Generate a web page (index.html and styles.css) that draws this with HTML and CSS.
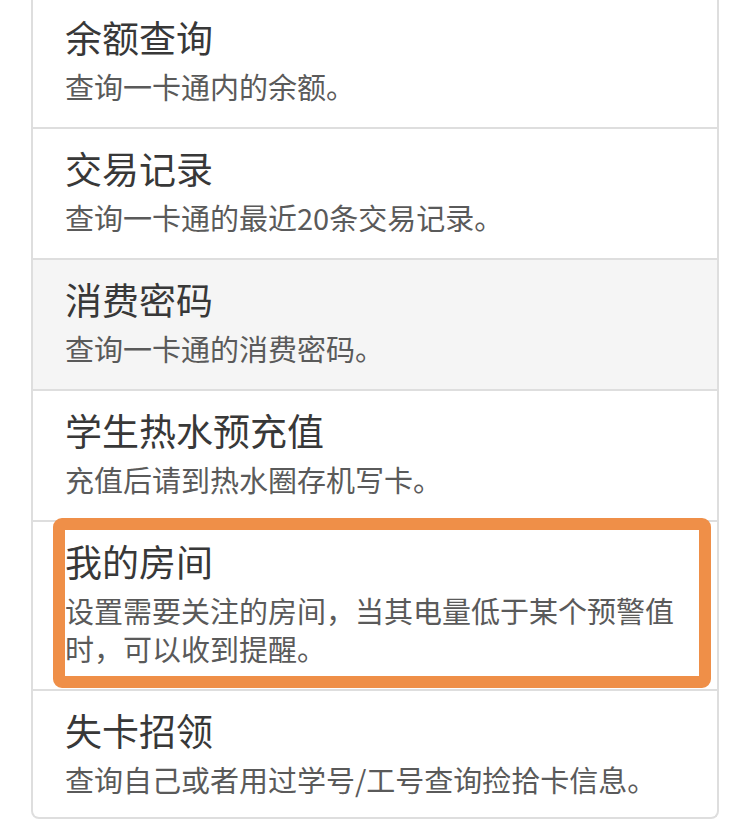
FILE: index.html
```html
<!DOCTYPE html>
<html lang="zh-CN">
<head>
<meta charset="utf-8">
<title>一卡通</title>
<link rel="stylesheet" href="styles.css">
</head>
<body>
<div class="list">
  <a class="item">
    <h4 class="item-title">余额查询</h4>
    <p class="item-text">查询一卡通内的余额。</p>
  </a>
  <a class="item">
    <h4 class="item-title">交易记录</h4>
    <p class="item-text">查询一卡通的最近20条交易记录。</p>
  </a>
  <a class="item item-active">
    <h4 class="item-title">消费密码</h4>
    <p class="item-text">查询一卡通的消费密码。</p>
  </a>
  <a class="item">
    <h4 class="item-title">学生热水预充值</h4>
    <p class="item-text">充值后请到热水圈存机写卡。</p>
  </a>
  <a class="item item-marked">
    <h4 class="item-title">我的房间</h4>
    <p class="item-text">设置需要关注的房间，当其电量低于某个预警值时，可以收到提醒。</p>
    <span class="highlight"></span>
  </a>
  <a class="item item-last">
    <h4 class="item-title">失卡招领</h4>
    <p class="item-text">查询自己或者用过学号/工号查询捡拾卡信息。</p>
  </a>
</div>
</body>
</html>
```

FILE: styles.css
```css
html, body {
  margin: 0;
  padding: 0;
  background: #ffffff;
}

body {
  font-family: "Noto Sans CJK SC", "Noto Sans", sans-serif;
  overflow: hidden;
}

.list {
  margin: -2px 0 0 31px;
  width: 688px;
  box-sizing: border-box;
  border: 2px solid #dedede;
  border-top: none;
  border-radius: 0 0 8px 8px;
  background: #ffffff;
}

.item {
  display: block;
  position: relative;
  padding: 19px 32px 22px 32px;
  border-bottom: 2px solid #dedede;
  color: #555555;
  text-decoration: none;
}

.item-last {
  border-bottom: none;
  padding-bottom: 19px;
}

.item-active {
  background: #f5f5f5;
}

.item-title {
  margin: 0 0 10px 0;
  font-size: 37px;
  line-height: 40px;
  font-weight: 400;
  color: #383838;
}

.item-text {
  margin: 0;
  font-size: 29px;
  line-height: 38px;
  color: #5a5a5a;
}

.highlight {
  position: absolute;
  top: -4px;
  left: 20px;
  right: 6px;
  bottom: 1px;
  border: 12px solid #ef8f48;
  border-radius: 9px;
  pointer-events: none;
}
```
